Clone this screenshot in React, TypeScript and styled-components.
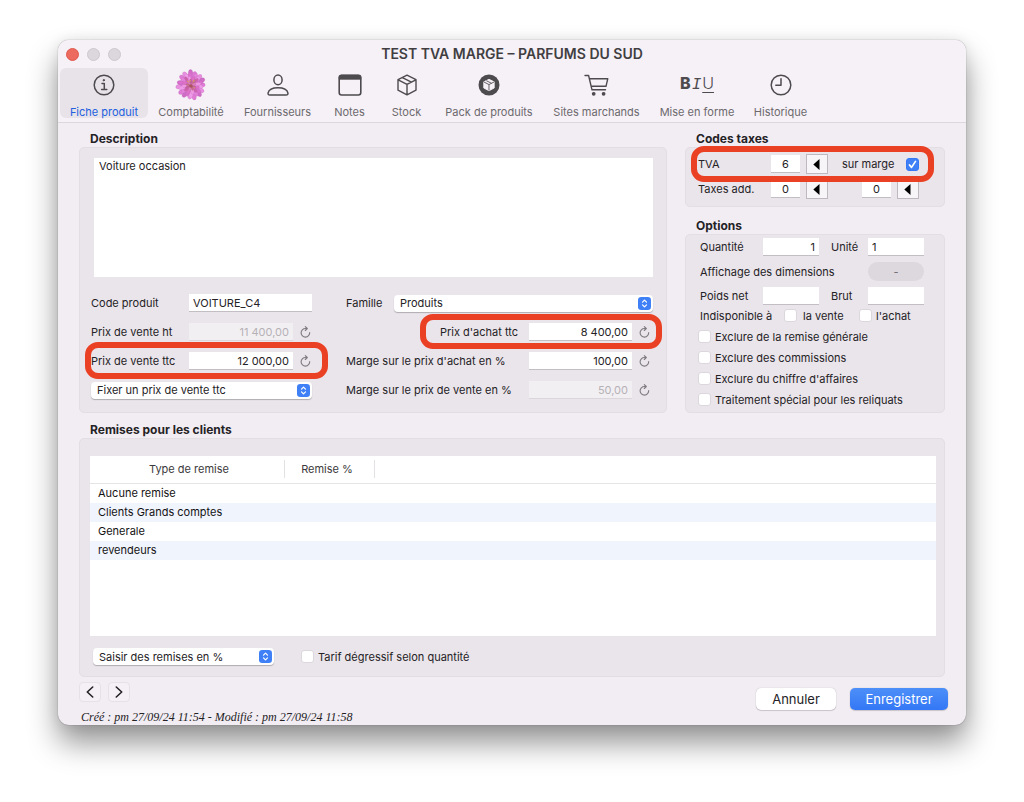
import React from "react";
import styled, { createGlobalStyle, css } from "styled-components";

const sans = '"Inter", "Liberation Sans", sans-serif';

const GlobalStyle = createGlobalStyle`
  *, *::before, *::after { box-sizing: border-box; }
  body { margin: 0; background: #fff; font-family: ${sans}; font-size: 11px; line-height: 16px; color: #242225; }
  input, select, textarea, button { font: inherit; color: inherit; margin: 0; }
`;

/* ---------- window ---------- */

const Desktop = styled.div`
  padding: 40px 58px 77px;
`;

const Window = styled.main`
  background: #f2edf3;
  border-radius: 11px;
  box-shadow: 0 0 1px rgba(0, 0, 0, 0.55), 0 0 14px rgba(0, 0, 0, 0.08), 0 18px 30px rgba(0, 0, 0, 0.42);
`;

const Header = styled.header`
  background: #f6f1f7;
  border-bottom: 1px solid #dcd7dd;
  border-radius: 11px 11px 0 0;
`;

const TitleBar = styled.div`
  display: grid;
  grid-template-columns: 80px 1fr 80px;
  align-items: center;
  height: 28px;
  padding: 0 8px;
`;

const Lights = styled.div`
  display: flex;
  gap: 8px;
`;

const Light = styled.button<{ $active?: boolean }>`
  width: 13px;
  height: 13px;
  padding: 0;
  border-radius: 50%;
  border: 1px solid ${(p) => (p.$active ? "#e0594f" : "#cdc8ce")};
  background: ${(p) => (p.$active ? "#ed6a5e" : "#dcd7dd")};
`;

const Title = styled.h1`
  margin: 0;
  font-size: 14px;
  line-height: 16px;
  font-weight: 600;
  text-align: center;
  color: #413e42;
`;

const Toolbar = styled.nav`
  display: flex;
  padding: 0 2px 4px;
`;

const Tool = styled.button<{ $width: number; $active?: boolean }>`
  display: flex;
  flex-direction: column;
  align-items: center;
  justify-content: space-between;
  width: ${(p) => p.$width}px;
  height: 50px;
  padding: 0;
  border: 0;
  border-radius: 6px;
  white-space: nowrap;
  font-size: 11px;
  line-height: 12px;
  background: ${(p) => (p.$active ? "#e8e3e9" : "transparent")};
  color: ${(p) => (p.$active ? "#2160e0" : "#6c696d")};
`;

const ToolIcon = styled.span`
  display: flex;
  align-items: center;
  justify-content: center;
  height: 34px;
  color: #4e4b4f;
`;

const FormatGlyphs = styled.span`
  display: flex;
  align-items: baseline;
  gap: 1px;
  padding-bottom: 2px;
  font-size: 16px;
  line-height: 20px;
  b { font-weight: 800; }
  i { font-family: "Liberation Mono", monospace; }
  u { font-weight: 300; text-decoration-thickness: 1px; text-underline-offset: 3px; }
`;

/* ---------- groups ---------- */

const Content = styled.div`
  display: grid;
  grid-template-columns: minmax(0, 1fr) 260px;
  column-gap: 18px;
  row-gap: 9px;
  padding: 8px 21px 0;
`;

const Side = styled.div`
  display: flex;
  flex-direction: column;
  gap: 11px;
`;

const Group = styled.section<{ $wide?: boolean; $grow?: boolean }>`
  display: flex;
  flex-direction: column;
  ${(p) => p.$grow && css`flex: 1;`}
  ${(p) => p.$wide && css`grid-column: 1 / -1;`}
`;

const GroupTitle = styled.h2`
  margin: 0;
  padding-left: 11px;
  font-size: 12px;
  line-height: 16px;
  font-weight: 700;
`;

const Panel = styled.div<{ $padding: string }>`
  flex: 1;
  padding: ${(p) => p.$padding};
  background: #eae5eb;
  border: 1px solid #e3dee4;
  border-radius: 5px;
`;

/* ---------- controls ---------- */

const Field = styled.input<{ $align?: string; $width?: number }>`
  ${(p) => (p.$width ? css`width: ${p.$width}px;` : css`width: 100%;`)}
  min-width: 0;
  height: 18px;
  padding: 0 4px;
  border: 0;
  border-bottom: 1px solid #c3bec4;
  border-radius: 0;
  background: #fff;
  text-align: ${(p) => p.$align ?? "left"};
  &:disabled {
    background: #f2eff3;
    border-bottom-color: #dbd6dc;
    color: #b5b1b6;
  }
`;

const Area = styled.textarea`
  display: block;
  width: 100%;
  height: 119px;
  padding: 0 5px;
  border: 0;
  outline: 0;
  resize: none;
  background: #fff;
`;

const SelectBox = styled.span<{ $width?: number }>`
  position: relative;
  display: block;
  ${(p) => (p.$width ? css`width: ${p.$width}px;` : css`flex: 1;`)}
  svg {
    position: absolute;
    top: 2px;
    right: 2px;
    pointer-events: none;
  }
`;

const Select = styled.select`
  display: block;
  width: 100%;
  height: 17px;
  padding: 0 18px 0 6px;
  appearance: none;
  border: 0;
  border-radius: 4px;
  background: #fff;
  box-shadow: 0 1px 1px rgba(0, 0, 0, 0.25);
`;

const Check = styled.input.attrs({ type: "checkbox" })`
  appearance: none;
  flex: none;
  width: 13px;
  height: 13px;
  border-radius: 3px;
  border: 1px solid #dcd7dd;
  background: #fff;
  &:checked {
    border-color: #3478f6;
    background: #3f80f7 url("data:image/svg+xml,%3Csvg xmlns='http://www.w3.org/2000/svg' viewBox='0 0 11 11'%3E%3Cpath d='M2.5 6l2 2.4L8.5 2.4' fill='none' stroke='white' stroke-width='1.7' stroke-linecap='round' stroke-linejoin='round'/%3E%3C/svg%3E") center / 11px 11px;
  }
`;

const CheckLabel = styled.label<{ $gap?: number }>`
  display: flex;
  align-items: center;
  gap: ${(p) => p.$gap ?? 4}px;
  white-space: nowrap;
`;

const IconButton = styled.button`
  display: flex;
  justify-content: center;
  flex: none;
  width: 13px;
  padding: 0;
  border: 0;
  background: none;
  color: #7e7b7f;
`;

const ArrowButton = styled.button`
  display: flex;
  align-items: center;
  justify-content: center;
  width: 22px;
  height: 20px;
  padding: 0;
  border: 1px solid #bdb9be;
  background: #f7f5f7;
`;

/* ---------- description ---------- */

const Columns = styled.div`
  display: grid;
  grid-template-columns: 221px minmax(0, 1fr);
  column-gap: 34px;
  margin: 17px 0 0 -3px;
`;

const Stack = styled.div`
  display: flex;
  flex-direction: column;
  gap: 11px;
`;

const Line = styled.div`
  position: relative;
  display: flex;
  align-items: center;
  height: 18px;
`;

const PriceLine = styled(Line)<{ $end: number }>`
  gap: 6px;
  padding-right: ${(p) => p.$end}px;
`;

const Caption = styled.label<{ $width: number; $right?: boolean }>`
  flex: none;
  width: ${(p) => p.$width}px;
  padding-right: ${(p) => (p.$right ? 5 : 0)}px;
  white-space: nowrap;
  text-align: ${(p) => (p.$right ? "right" : "left")};
`;

const Highlight = styled.span<{ $inset: string }>`
  position: absolute;
  z-index: 1;
  inset: ${(p) => p.$inset};
  border: 6px solid #ea4024;
  border-radius: 13px;
  pointer-events: none;
`;

/* ---------- taxes and options ---------- */

const TaxRow = styled.div`
  position: relative;
  display: flex;
  align-items: center;
  height: 20px;
  & + & { margin-top: 5px; }
`;

const TaxSet = styled.span<{ $left: number }>`
  display: flex;
  align-items: center;
  gap: 6px;
  margin-left: ${(p) => p.$left}px;
`;

const OptionGrid = styled.div`
  display: grid;
  grid-template-columns: 51px 56px 25px 56px;
  grid-template-rows: 18px 21px 18px;
  row-gap: 5px;
  column-gap: 12px;
  align-items: center;
  padding-left: 2px;
`;

const WideLabel = styled.span`
  grid-column: span 3;
`;

const Pill = styled.button`
  height: 19px;
  padding: 0;
  border: 0;
  border-radius: 10px;
  background: #ddd8de;
  color: #6f6c70;
`;

const OptionRow = styled.div<{ $indent?: boolean }>`
  display: flex;
  align-items: center;
  height: 21px;
  padding-left: ${(p) => (p.$indent ? 2 : 0)}px;
`;

const Availability = styled.span<{ $width: number }>`
  width: ${(p) => p.$width}px;
  white-space: nowrap;
`;

/* ---------- table ---------- */

const TableFrame = styled.div`
  height: 181px;
  background: #fff;
  border-bottom: 1px solid #e8e4e9;
`;

const Table = styled.table`
  width: 100%;
  table-layout: fixed;
  border-collapse: collapse;
  col:nth-child(1) { width: 195px; }
  col:nth-child(2) { width: 90px; }
  th { height: 27px; padding: 0; font-weight: 400; border-bottom: 1px solid #e6e4e7; color: #3c3a3d; }
  th span { display: block; padding-left: 4px; line-height: 18px; border-right: 1px solid #e3e1e4; }
  th + th span { padding: 0 5px 0 0; }
  td { height: 19px; padding: 0 8px; line-height: 19px; color: #141314; }
  tbody tr:nth-child(even) { background: #f0f4fd; }
`;

const TableTools = styled.div`
  display: flex;
  align-items: center;
  gap: 27px;
  padding: 11px 0 0 3px;
`;

/* ---------- footer ---------- */

const Footer = styled.footer`
  display: flex;
  justify-content: space-between;
  align-items: flex-start;
  height: 48px;
  padding: 5px 18px 0 21px;
`;

const Pager = styled.div`
  display: flex;
  gap: 7px;
`;

const PagerButton = styled.button`
  display: flex;
  align-items: center;
  justify-content: center;
  width: 22px;
  height: 20px;
  padding: 0;
  border: 1px solid #e6e1e7;
  border-radius: 4px;
  background: #f5f0f6;
`;

const Stamp = styled.p`
  margin: 7px 0 0 2px;
  font: italic 12px/16px "Liberation Serif", serif;
`;

const Actions = styled.div`
  display: flex;
  gap: 14px;
  padding-top: 6px;
`;

const Action = styled.button<{ $primary?: boolean }>`
  width: ${(p) => (p.$primary ? 98 : 80)}px;
  height: 22px;
  padding: 0;
  border: 0;
  border-radius: 5px;
  font-size: 13px;
  line-height: 22px;
  background: ${(p) => (p.$primary ? "linear-gradient(#4d8ff8, #3377f6)" : "#fff")};
  color: ${(p) => (p.$primary ? "#fff" : "#242225")};
  box-shadow: 0 0 1px rgba(0, 0, 0, 0.3), 0 1px 1px rgba(0, 0, 0, 0.15);
`;

/* ---------- icons ---------- */

const line = { fill: "none", stroke: "currentColor", strokeLinecap: "round", strokeLinejoin: "round" } as const;

const InfoIcon = () => (
  <svg width="22" height="22" viewBox="0 0 22 22" {...line} strokeWidth="1.5">
    <circle cx="11" cy="11" r="9.8" />
    <circle cx="10.8" cy="6.2" r="0.7" fill="currentColor" strokeWidth="1" />
    <path d="M9 9.4h2.3v6M8.6 15.6h5.2" />
  </svg>
);

const petalRings = [
  { count: 15, r: 9.8, rx: 4.8, ry: 2.4, fills: ["#e07bd6", "#cf6cc6", "#e88fe0"] },
  { count: 14, r: 8, rx: 4.4, ry: 2, fills: ["#f09be9", "#e382da", "#db70cf"] },
  { count: 12, r: 5.6, rx: 3.6, ry: 1.6, fills: ["#de70c8", "#f09ae4", "#d062ae"] },
  { count: 9, r: 3.2, rx: 2.6, ry: 1.2, fills: ["#c3609a", "#dd80bb", "#c86f84"] },
];

const FlowerIcon = () => (
  <svg width="32" height="32" viewBox="-16 -16 32 32">
    <circle r="10" fill="#d873cc" />
    {petalRings.map((ring, k) =>
      Array.from({ length: ring.count }, (_, i) => (
        <ellipse
          key={`${k}-${i}`}
          cx={ring.r + (((i * 5) % 4) - 1) * 0.4}
          rx={ring.rx}
          ry={ring.ry}
          fill={ring.fills[(i * 2) % 3]}
          stroke="#b765ae"
          strokeWidth="0.2"
          transform={`rotate(${(i * 360) / ring.count + k * 9 + (i % 2) * 4})`}
        />
      )),
    )}
    <circle cy="1" r="1.8" fill="#a9535f" />
    <path d="M-4 -4l1.5 1M3 -5l-.6 1.6M4 3l-1.4-.9M-1 -5v1.5" stroke="#dba25c" strokeWidth="1" />
  </svg>
);

const PersonIcon = () => (
  <svg width="22" height="22" viewBox="0 0 22 22" {...line} strokeWidth="1.5">
    <ellipse cx="11" cy="5.9" rx="4.1" ry="4.8" />
    <path d="M3 21C1.2 21 .9 20 1.1 18.9 1.8 15.7 5.7 13.7 11 13.7s9.2 2 9.9 5.2C21.1 20 20.8 21 19 21Z" />
  </svg>
);

const NotesIcon = () => (
  <svg width="24" height="22" viewBox="0 0 24 22" {...line} strokeWidth="1.6">
    <rect x="1.2" y="1.2" width="21.6" height="19.8" rx="2.4" />
    <path d="M1.2 5V3.6A2.4 2.4 0 0 1 3.6 1.2H20.4A2.4 2.4 0 0 1 22.8 3.6V5Z" fill="currentColor" strokeWidth="0.8" />
  </svg>
);

const CubeIcon = () => (
  <svg width="22" height="22" viewBox="0 0 22 22" {...line} strokeWidth="1.4">
    <path d="M11 1.2L20 5.6V16.2L11 20.9 2 16.2V5.6ZM2.2 5.8L11 10.3 19.8 5.8M11 10.3V20.6M6.4 3.6L15.4 8.1" />
  </svg>
);

const PackIcon = () => (
  <svg width="22" height="22" viewBox="0 0 22 22">
    <circle cx="11" cy="11" r="10.5" fill="currentColor" />
    <g transform="translate(4.6 4.6) scale(0.58)" fill="#f6f1f7" stroke="#f6f1f7" strokeWidth="1.5" strokeLinejoin="round">
      <path d="M11 1.2L20 5.6V16.2L11 20.9 2 16.2V5.6Z" />
    </g>
    <g transform="translate(4.6 4.6) scale(0.58)" fill="none" stroke="currentColor" strokeWidth="1.5">
      <path d="M2.2 5.8L11 10.3 19.8 5.8M11 10.3V20.6M6.4 3.6L15.4 8.1" />
    </g>
  </svg>
);

const CartIcon = () => (
  <svg width="25" height="22" viewBox="0 0 25 22" {...line} strokeWidth="1.4">
    <path d="M1 1.5H4.6L8 15.8H21.5M5.4 4.7H23.8L22 12.3H7.2" />
    <circle cx="9.7" cy="19.8" r="1.2" fill="currentColor" />
    <circle cx="19.6" cy="19.8" r="1.2" fill="currentColor" />
  </svg>
);

const ClockIcon = () => (
  <svg width="22" height="22" viewBox="0 0 22 22" {...line} strokeWidth="1.5">
    <circle cx="11" cy="11" r="9.8" />
    <path d="M11 4.7V11.3H5.8" />
  </svg>
);

const ReloadIcon = () => (
  <svg width="11" height="12" viewBox="0 0 11 12" {...line} strokeWidth="1.1">
    <path d="M9.7 6.6A4.3 4.3 0 1 1 5.4 2.5H7M5.3 0.6L7.3 2.5 5.3 4.5" />
  </svg>
);

const StepperIcon = () => (
  <svg width="13" height="13" viewBox="0 0 13 13">
    <rect width="13" height="13" rx="3.2" fill="#3f80f7" />
    <path d="M4.5 5.2l2-2 2 2M4.5 7.8l2 2 2-2" fill="none" stroke="#fff" strokeWidth="1.2" strokeLinecap="round" strokeLinejoin="round" />
  </svg>
);

const TriangleIcon = () => (
  <svg width="8" height="11" viewBox="0 0 8 11">
    <path d="M6.5 0V11L0.3 5.5Z" fill="#000" />
  </svg>
);

const Chevron = ({ next }: { next?: boolean }) => (
  <svg width="8" height="12" viewBox="0 0 8 12" {...line} strokeWidth="1.6">
    <path d={next ? "M1.3 1L6.7 6 1.3 11" : "M6.7 1L1.3 6 6.7 11"} />
  </svg>
);

/* ---------- data ---------- */

const tools = [
  { label: "Fiche produit", width: 88, icon: <InfoIcon />, active: true },
  { label: "Comptabilité", width: 86, icon: <FlowerIcon /> },
  { label: "Fournisseurs", width: 87, icon: <PersonIcon /> },
  { label: "Notes", width: 57, icon: <NotesIcon /> },
  { label: "Stock", width: 57, icon: <CubeIcon /> },
  { label: "Pack de produits", width: 108, icon: <PackIcon /> },
  { label: "Sites marchands", width: 107, icon: <CartIcon /> },
  { label: "Mise en forme", width: 94, icon: <FormatGlyphs aria-hidden><b>B</b><i>I</i><u>U</u></FormatGlyphs> },
  { label: "Historique", width: 73, icon: <ClockIcon /> },
];

const discounts = ["Aucune remise", "Clients Grands comptes", "Generale", "revendeurs"];

const exclusions = [
  "Exclure de la remise générale",
  "Exclure des commissions",
  "Exclure du chiffre d'affaires",
  "Traitement spécial pour les reliquats",
];

type PriceProps = {
  id: string;
  label: string;
  value: string;
  captionWidth: number;
  end?: number;
  right?: boolean;
  disabled?: boolean;
  highlight?: string;
};

const Price = ({ id, label, value, captionWidth, end = 0, right, disabled, highlight }: PriceProps) => (
  <PriceLine $end={end}>
    <Caption htmlFor={id} $width={captionWidth} $right={right}>{label}</Caption>
    <Field id={id} defaultValue={value} disabled={disabled} $align="right" />
    <IconButton type="button" aria-label="Recalculer"><ReloadIcon /></IconButton>
    {highlight && <Highlight $inset={highlight} />}
  </PriceLine>
);

const Popup = ({ id, value, width, label }: { id: string; value: string; width?: number; label?: string }) => (
  <SelectBox $width={width}>
    <Select id={id} aria-label={label} defaultValue={value}><option>{value}</option></Select>
    <StepperIcon />
  </SelectBox>
);

const TaxCode = ({ id, value, left, label }: { id: string; value: string; left: number; label?: string }) => (
  <TaxSet $left={left}>
    <Field id={id} aria-label={label} defaultValue={value} $align="center" $width={29} />
    <ArrowButton type="button" aria-label="Choisir"><TriangleIcon /></ArrowButton>
  </TaxSet>
);

export default function App() {
  return (
    <Desktop>
      <GlobalStyle />
      <Window>
        <Header>
          <TitleBar>
            <Lights>
              <Light $active aria-label="Fermer" />
              <Light aria-label="Réduire" />
              <Light aria-label="Agrandir" />
            </Lights>
            <Title>TEST TVA MARGE – PARFUMS DU SUD</Title>
          </TitleBar>
          <Toolbar>
            {tools.map((t) => (
              <Tool key={t.label} type="button" $width={t.width} $active={t.active}>
                <ToolIcon>{t.icon}</ToolIcon>
                {t.label}
              </Tool>
            ))}
          </Toolbar>
        </Header>

        <Content>
          <Group>
            <GroupTitle id="description">Description</GroupTitle>
            <Panel $padding="10px 13px 13px 14px">
              <Area aria-labelledby="description" defaultValue="Voiture occasion" />
              <Columns>
                <Stack>
                  <Line>
                    <Caption htmlFor="code" $width={98}>Code produit</Caption>
                    <Field id="code" defaultValue="VOITURE_C4" />
                  </Line>
                  <Price id="ht" label="Prix de vente ht" value="11 400,00" captionWidth={92} disabled />
                  <Price id="ttc" label="Prix de vente ttc" value="12 000,00" captionWidth={92} highlight="-10px -16px -9px -6px" />
                  <Line>
                    <Popup id="mode" label="Mode de prix" value="Fixer un prix de vente ttc" />
                  </Line>
                </Stack>
                <Stack>
                  <Line>
                    <Caption htmlFor="famille" $width={48}>Famille</Caption>
                    <Popup id="famille" value="Produits" />
                  </Line>
                  <Price id="achat" label="Prix d'achat ttc" value="8 400,00" captionWidth={177} end={2} right highlight="-9px -9px -8px 74px" />
                  <Price id="margeAchat" label="Marge sur le prix d'achat en %" value="100,00" captionWidth={177} end={2} />
                  <Price id="margeVente" label="Marge sur le prix de vente en %" value="50,00" captionWidth={177} end={2} disabled />
                </Stack>
              </Columns>
            </Panel>
          </Group>

          <Side>
            <Group>
              <GroupTitle>Codes taxes</GroupTitle>
              <Panel $padding="6px 12px 7px">
                <TaxRow>
                  <Caption htmlFor="tva" $width={73}>TVA</Caption>
                  <TaxCode id="tva" value="6" left={0} />
                  <TaxSet $left={14}>
                    <CheckLabel $gap={12}>sur marge <Check defaultChecked /></CheckLabel>
                  </TaxSet>
                  <Highlight $inset="-8px -2px -8px -7px" />
                </TaxRow>
                <TaxRow>
                  <Caption htmlFor="taxe1" $width={73}>Taxes add.</Caption>
                  <TaxCode id="taxe1" value="0" left={0} />
                  <TaxCode id="taxe2" label="Seconde taxe additionnelle" value="0" left={34} />
                </TaxRow>
              </Panel>
            </Group>

            <Group $grow>
              <GroupTitle>Options</GroupTitle>
              <Panel $padding="3px 12px 1px">
                <OptionGrid>
                  <label htmlFor="quantite">Quantité</label>
                  <Field id="quantite" defaultValue="1" $align="right" />
                  <label htmlFor="unite">Unité</label>
                  <Field id="unite" defaultValue="1" />
                  <WideLabel id="dimensions">Affichage des dimensions</WideLabel>
                  <Pill type="button" aria-labelledby="dimensions">-</Pill>
                  <label htmlFor="net">Poids net</label>
                  <Field id="net" />
                  <label htmlFor="brut">Brut</label>
                  <Field id="brut" />
                </OptionGrid>
                <OptionRow $indent>
                  <Availability $width={84}>Indisponible à</Availability>
                  <Availability $width={75}><CheckLabel $gap={6}><Check /> la vente</CheckLabel></Availability>
                  <CheckLabel><Check /> l'achat</CheckLabel>
                </OptionRow>
                {exclusions.map((label) => (
                  <OptionRow key={label}>
                    <CheckLabel><Check /> {label}</CheckLabel>
                  </OptionRow>
                ))}
              </Panel>
            </Group>
          </Side>

          <Group $wide>
            <GroupTitle>Remises pour les clients</GroupTitle>
            <Panel $padding="17px 8px 11px 10px">
              <TableFrame>
                <Table>
                  <colgroup><col /><col /><col /></colgroup>
                  <thead>
                    <tr>
                      <th><span>Type de remise</span></th>
                      <th><span>Remise %</span></th>
                      <th aria-hidden />
                    </tr>
                  </thead>
                  <tbody>
                    {discounts.map((name) => (
                      <tr key={name}><td>{name}</td><td /><td /></tr>
                    ))}
                  </tbody>
                </Table>
              </TableFrame>
              <TableTools>
                <Popup id="saisie" label="Mode de saisie" value="Saisir des remises en %" width={181} />
                <CheckLabel><Check /> Tarif dégressif selon quantité</CheckLabel>
              </TableTools>
            </Panel>
          </Group>
        </Content>

        <Footer>
          <div>
            <Pager>
              <PagerButton type="button" aria-label="Précédent"><Chevron /></PagerButton>
              <PagerButton type="button" aria-label="Suivant"><Chevron next /></PagerButton>
            </Pager>
            <Stamp>Créé : pm 27/09/24 11:54 - Modifié : pm 27/09/24 11:58</Stamp>
          </div>
          <Actions>
            <Action type="button">Annuler</Action>
            <Action type="button" $primary>Enregistrer</Action>
          </Actions>
        </Footer>
      </Window>
    </Desktop>
  );
}
